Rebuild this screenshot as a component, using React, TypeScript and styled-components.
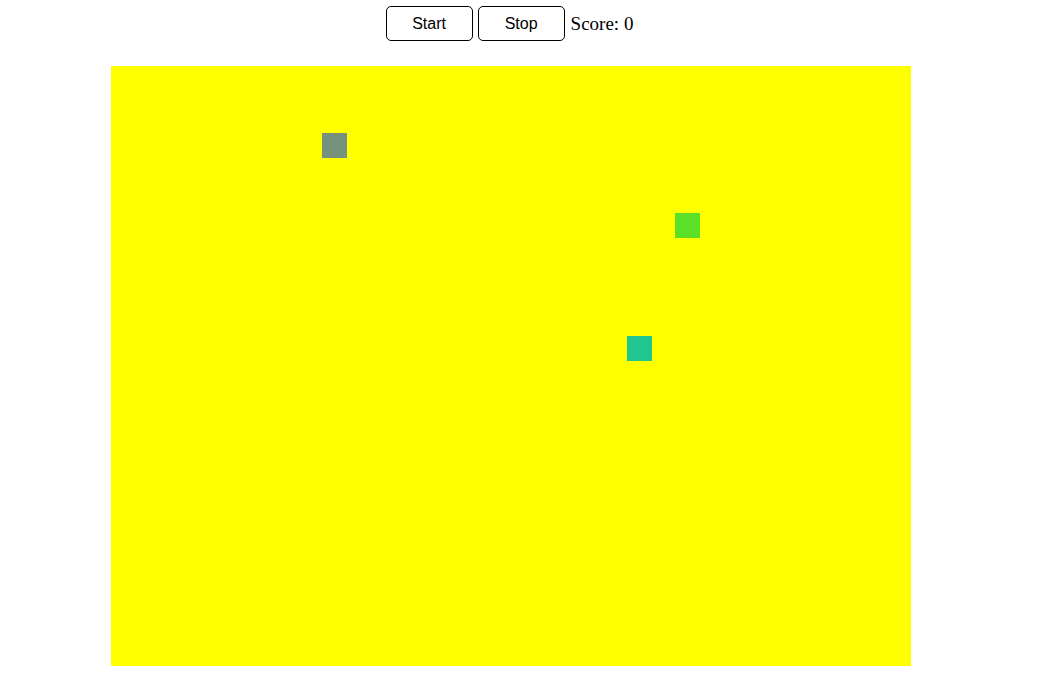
import React from "react";
import styled, { createGlobalStyle } from "styled-components";

const Global = createGlobalStyle`
  html, body { margin: 0; padding: 0; background: #fff; }
  body { font-family: "Liberation Serif", "Times New Roman", serif; }
`;

const Page = styled.div`
  width: 1022px;
  display: flex;
  flex-direction: column;
  align-items: center;
  padding-top: 6px;
`;

const Toolbar = styled.div`
  display: flex;
  align-items: center;
  gap: 5px;
  height: 35px;
  padding-right: 3px;
`;

const Button = styled.button`
  width: 87px;
  height: 35px;
  background: #fff;
  border: 1px solid #000;
  border-radius: 5px;
  font-family: "Liberation Sans", Arial, sans-serif;
  font-size: 16px;
  color: #000;
  padding: 0;
  cursor: pointer;
`;

const Score = styled.span`
  font-family: "Liberation Serif", "Times New Roman", serif;
  font-size: 19px;
  color: #000;
  margin-left: 1px;
`;

const Board = styled.svg`
  display: block;
  margin-top: 25px;
  background: #ffff00;
`;

const squares = [
  { x: 211, y: 67, c: "#77927c" },
  { x: 564, y: 147, c: "#5ae026" },
  { x: 516, y: 270, c: "#20c690" },
];

export default function App() {
  return (
    <>
      <Global />
      <Page>
        <Toolbar>
          <Button>Start</Button>
          <Button>Stop</Button>
          <Score>Score: 0</Score>
        </Toolbar>
        <Board width={800} height={600} viewBox="0 0 800 600">
          {squares.map((s, i) => (
            <rect key={i} x={s.x} y={s.y} width={25} height={25} fill={s.c} />
          ))}
        </Board>
      </Page>
    </>
  );
}
